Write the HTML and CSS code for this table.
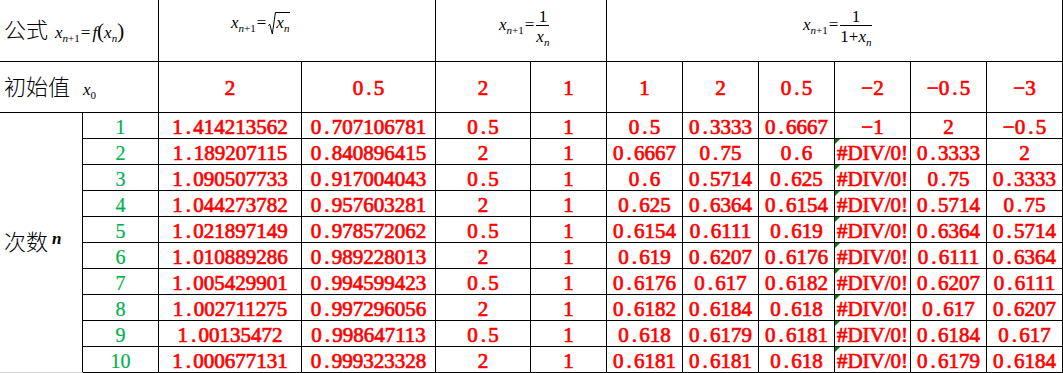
FILE: index.html
```html
<!DOCTYPE html>
<html lang="zh-CN">
<head>
<meta charset="utf-8">
<title>迭代数列</title>
<link rel="stylesheet" href="styles.css">
</head>
<body>
<table class="sheet">
  <colgroup>
    <col class="c-a"><col class="c-b"><col class="c-c"><col class="c-d"><col class="c-e">
    <col class="c-n"><col class="c-n"><col class="c-n"><col class="c-n"><col class="c-n"><col class="c-n"><col class="c-n">
  </colgroup>
  <tr class="r-formula">
    <td colspan="2" class="lbl"><span class="cjk">公式</span><span class="eq eq-f"><i>x</i><sub><i>n</i>+1</sub><span class="op">=</span><i>f</i><span class="paren">(</span><i>x</i><sub><i>n</i></sub><span class="paren">)</span></span></td>
    <td colspan="2" class="eqcell eq-sqrt"><span class="eq"><i>x</i><sub><i>n</i>+1</sub><span class="op">=</span><span class="sqrt"><svg class="radix" width="8" height="23" viewBox="0 0 8 23"><path d="M0.3 13.5 L1.8 12.3 L4.3 22 L7.4 0.5 L8 0.5" fill="none" stroke="#000" stroke-width="1"/></svg><span class="rad"><i>x</i><sub><i>n</i></sub></span></span></span></td>
    <td colspan="2" class="eqcell eq-inv"><span class="eq"><i>x</i><sub><i>n</i>+1</sub><span class="op">=</span><span class="frac"><span class="num">1</span><span class="den"><i>x</i><sub><i>n</i></sub></span></span></span></td>
    <td colspan="6" class="eqcell eq-inv1"><span class="eq"><i>x</i><sub><i>n</i>+1</sub><span class="op">=</span><span class="frac"><span class="num">1</span><span class="den">1+<i>x</i><sub><i>n</i></sub></span></span></span></td>
  </tr>
  <tr class="r-init">
    <td colspan="2" class="lbl"><span class="cjk">初始值</span><span class="eq eq-x0"><i>x</i><sub>0</sub></span></td>
    <td class="v">2</td>
    <td class="v">0<span class="p">.</span>5</td>
    <td class="v">2</td>
    <td class="v">1</td>
    <td class="v">1</td>
    <td class="v">2</td>
    <td class="v">0<span class="p">.</span>5</td>
    <td class="v">−2</td>
    <td class="v">−0<span class="p">.</span>5</td>
    <td class="v">−3</td>
  </tr>
  <tr class="r-data">
    <td rowspan="10" class="lbl cnt"><span class="cjk">次数</span><sup class="eq eq-n"><i>n</i></sup></td>
    <td class="idx">1</td>
    <td class="v">1<span class="p">.</span>414213562</td>
    <td class="v">0<span class="p">.</span>707106781</td>
    <td class="v">0<span class="p">.</span>5</td>
    <td class="v">1</td>
    <td class="v">0<span class="p">.</span>5</td>
    <td class="v">0<span class="p">.</span>3333</td>
    <td class="v">0<span class="p">.</span>6667</td>
    <td class="v">−1</td>
    <td class="v">2</td>
    <td class="v">−0<span class="p">.</span>5</td>
  </tr>
  <tr class="r-data">
    <td class="idx">2</td>
    <td class="v">1<span class="p">.</span>189207115</td>
    <td class="v">0<span class="p">.</span>840896415</td>
    <td class="v">2</td>
    <td class="v">1</td>
    <td class="v">0<span class="p">.</span>6667</td>
    <td class="v">0<span class="p">.</span>75</td>
    <td class="v">0<span class="p">.</span>6</td>
    <td class="v err">#DIV/0!</td>
    <td class="v">0<span class="p">.</span>3333</td>
    <td class="v">2</td>
  </tr>
  <tr class="r-data">
    <td class="idx">3</td>
    <td class="v">1<span class="p">.</span>090507733</td>
    <td class="v">0<span class="p">.</span>917004043</td>
    <td class="v">0<span class="p">.</span>5</td>
    <td class="v">1</td>
    <td class="v">0<span class="p">.</span>6</td>
    <td class="v">0<span class="p">.</span>5714</td>
    <td class="v">0<span class="p">.</span>625</td>
    <td class="v err">#DIV/0!</td>
    <td class="v">0<span class="p">.</span>75</td>
    <td class="v">0<span class="p">.</span>3333</td>
  </tr>
  <tr class="r-data">
    <td class="idx">4</td>
    <td class="v">1<span class="p">.</span>044273782</td>
    <td class="v">0<span class="p">.</span>957603281</td>
    <td class="v">2</td>
    <td class="v">1</td>
    <td class="v">0<span class="p">.</span>625</td>
    <td class="v">0<span class="p">.</span>6364</td>
    <td class="v">0<span class="p">.</span>6154</td>
    <td class="v err">#DIV/0!</td>
    <td class="v">0<span class="p">.</span>5714</td>
    <td class="v">0<span class="p">.</span>75</td>
  </tr>
  <tr class="r-data">
    <td class="idx">5</td>
    <td class="v">1<span class="p">.</span>021897149</td>
    <td class="v">0<span class="p">.</span>978572062</td>
    <td class="v">0<span class="p">.</span>5</td>
    <td class="v">1</td>
    <td class="v">0<span class="p">.</span>6154</td>
    <td class="v">0<span class="p">.</span>6111</td>
    <td class="v">0<span class="p">.</span>619</td>
    <td class="v err">#DIV/0!</td>
    <td class="v">0<span class="p">.</span>6364</td>
    <td class="v">0<span class="p">.</span>5714</td>
  </tr>
  <tr class="r-data">
    <td class="idx">6</td>
    <td class="v">1<span class="p">.</span>010889286</td>
    <td class="v">0<span class="p">.</span>989228013</td>
    <td class="v">2</td>
    <td class="v">1</td>
    <td class="v">0<span class="p">.</span>619</td>
    <td class="v">0<span class="p">.</span>6207</td>
    <td class="v">0<span class="p">.</span>6176</td>
    <td class="v err">#DIV/0!</td>
    <td class="v">0<span class="p">.</span>6111</td>
    <td class="v">0<span class="p">.</span>6364</td>
  </tr>
  <tr class="r-data">
    <td class="idx">7</td>
    <td class="v">1<span class="p">.</span>005429901</td>
    <td class="v">0<span class="p">.</span>994599423</td>
    <td class="v">0<span class="p">.</span>5</td>
    <td class="v">1</td>
    <td class="v">0<span class="p">.</span>6176</td>
    <td class="v">0<span class="p">.</span>617</td>
    <td class="v">0<span class="p">.</span>6182</td>
    <td class="v err">#DIV/0!</td>
    <td class="v">0<span class="p">.</span>6207</td>
    <td class="v">0<span class="p">.</span>6111</td>
  </tr>
  <tr class="r-data">
    <td class="idx">8</td>
    <td class="v">1<span class="p">.</span>002711275</td>
    <td class="v">0<span class="p">.</span>997296056</td>
    <td class="v">2</td>
    <td class="v">1</td>
    <td class="v">0<span class="p">.</span>6182</td>
    <td class="v">0<span class="p">.</span>6184</td>
    <td class="v">0<span class="p">.</span>618</td>
    <td class="v err">#DIV/0!</td>
    <td class="v">0<span class="p">.</span>617</td>
    <td class="v">0<span class="p">.</span>6207</td>
  </tr>
  <tr class="r-data">
    <td class="idx">9</td>
    <td class="v">1<span class="p">.</span>00135472</td>
    <td class="v">0<span class="p">.</span>998647113</td>
    <td class="v">0<span class="p">.</span>5</td>
    <td class="v">1</td>
    <td class="v">0<span class="p">.</span>618</td>
    <td class="v">0<span class="p">.</span>6179</td>
    <td class="v">0<span class="p">.</span>6181</td>
    <td class="v err">#DIV/0!</td>
    <td class="v">0<span class="p">.</span>6184</td>
    <td class="v">0<span class="p">.</span>617</td>
  </tr>
  <tr class="r-data">
    <td class="idx">10</td>
    <td class="v">1<span class="p">.</span>000677131</td>
    <td class="v">0<span class="p">.</span>999323328</td>
    <td class="v">2</td>
    <td class="v">1</td>
    <td class="v">0<span class="p">.</span>6181</td>
    <td class="v">0<span class="p">.</span>6181</td>
    <td class="v">0<span class="p">.</span>618</td>
    <td class="v err">#DIV/0!</td>
    <td class="v">0<span class="p">.</span>6179</td>
    <td class="v">0<span class="p">.</span>6184</td>
  </tr>
</table>
</body>
</html>
```

FILE: styles.css
```css
* { box-sizing: border-box; }
html, body { margin: 0; background: #fff; }
body { font-family: "Liberation Serif", "Times New Roman", serif; color: #000; }

.sheet {
  border-collapse: separate;
  border-spacing: 0;
  table-layout: fixed;
  width: 1063px;
}
.sheet td {
  padding: 0;
  border-right: 1px solid #000;
  border-bottom: 1px solid #000;
  white-space: nowrap;
  overflow: visible;
}

.c-a { width: 83px; }
.c-b { width: 76px; }
.c-c { width: 143px; }
.c-d { width: 134px; }
.c-e { width: 95px; }
.c-n { width: 76px; }

.r-formula { height: 62px; }
.r-init { height: 51px; }
.r-data { height: 26px; }

/* labels in the first column */
.lbl {
  text-align: left;
  vertical-align: middle;
  padding-left: 4px !important;
  line-height: 30px;
}
.cjk {
  font-family: "Noto Sans CJK SC", sans-serif;
  font-size: 22px;
  font-weight: 300;
}
.cnt { border-bottom-color: #d4d4d4 !important; }

/* equations */
.eq {
  font-family: "Liberation Serif", "Times New Roman", serif;
  font-size: 17px;
  line-height: 17px;
  font-style: normal;
}
.eq i { font-style: italic; }
.eq sub {
  font-size: 11px;
  line-height: 0;
  vertical-align: -4px;
}
.op { margin: 0 2px 0 1px; }
.paren { font-size: 21px; }
.eq-f { margin-left: 7px; }
.eq-x0 { margin-left: 13px; }
.eq-n {
  font-size: 17px;
  font-weight: 700;
  line-height: 0;
  vertical-align: 6px;
  margin-left: 4px;
}

.eqcell { vertical-align: top; text-align: left; }
.eq-sqrt { padding: 12px 0 0 72px !important; }
.eq-inv { padding: 8px 0 0 63px !important; }
.eq-inv1 { padding: 8px 0 0 196px !important; }

.sqrt {
  position: relative;
  display: inline-block;
  padding-left: 8px;
}
.radix { position: absolute; left: 0; top: 0; }
.rad {
  display: inline-block;
  border-top: 1px solid #000;
  padding-top: 1px;
  padding-right: 1px;
  line-height: 17px;
}

.frac {
  display: inline-flex;
  flex-direction: column;
  align-items: stretch;
  vertical-align: middle;
  text-align: center;
}
.num {
  border-bottom: 1px solid #000;
  line-height: 17px;
  padding: 0 1px;
}
.den {
  line-height: 17px;
  padding-top: 2px;
}

/* values */
.v {
  color: #f00;
  font-weight: 400;
  -webkit-text-stroke: 0.7px #f00;
  font-size: 21px;
  line-height: 21px;
  text-align: center;
  vertical-align: bottom;
}
.r-init .v { vertical-align: middle; padding-top: 3px !important; }
.p {
  display: inline-block;
  width: 0.5em;
  padding-left: 3px;
  text-align: left;
}
.idx {
  color: #00b050;
  -webkit-text-stroke: 0.2px #00b050;
  font-size: 20px;
  line-height: 21px;
  text-align: center;
  vertical-align: bottom;
}

.err { position: relative; }
.err::before {
  content: "";
  position: absolute;
  left: 0;
  top: 0;
  border-top: 5px solid #008000;
  border-right: 5px solid transparent;
}
```
